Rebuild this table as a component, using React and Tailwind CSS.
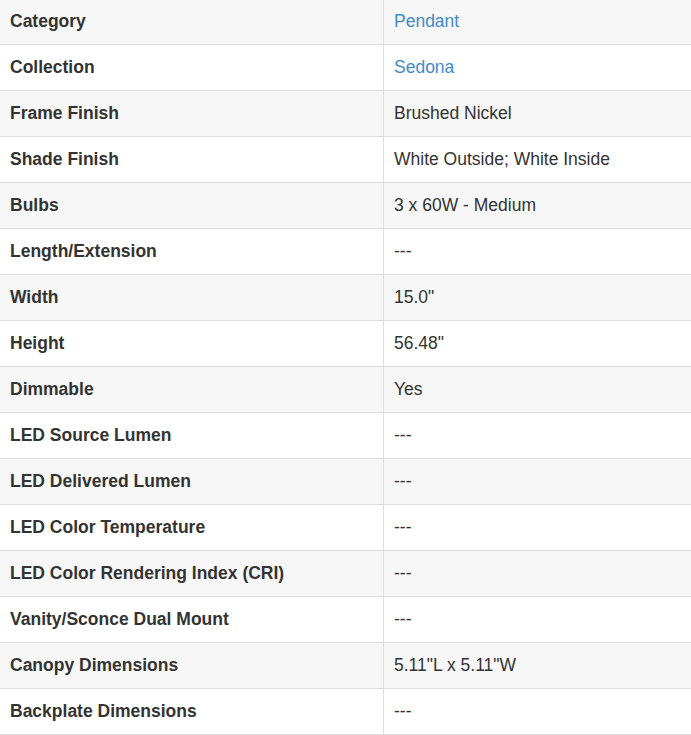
const specs = [
  { label: "Category", value: "Pendant", link: true },
  { label: "Collection", value: "Sedona", link: true },
  { label: "Frame Finish", value: "Brushed Nickel" },
  { label: "Shade Finish", value: "White Outside; White Inside" },
  { label: "Bulbs", value: "3 x 60W - Medium" },
  { label: "Length/Extension", value: "---" },
  { label: "Width", value: "15.0\"" },
  { label: "Height", value: "56.48\"" },
  { label: "Dimmable", value: "Yes" },
  { label: "LED Source Lumen", value: "---" },
  { label: "LED Delivered Lumen", value: "---" },
  { label: "LED Color Temperature", value: "---" },
  { label: "LED Color Rendering Index (CRI)", value: "---" },
  { label: "Vanity/Sconce Dual Mount", value: "---" },
  { label: "Canopy Dimensions", value: "5.11\"L x 5.11\"W" },
  { label: "Backplate Dimensions", value: "---" },
];

export default function App() {
  return (
    <div className="w-[691px] h-[735px] overflow-hidden bg-white font-['Liberation_Sans',Arial,sans-serif] text-[17.5px] text-[#333]">
      <div className="-mt-px flex flex-col">
        {specs.map((row, i) => (
          <div
            key={row.label}
            className={`flex h-[46px] border-b border-[#ddd] ${i % 2 === 0 ? "bg-[#f7f7f7]" : "bg-white"}`}
          >
            <div className="w-[384px] shrink-0 border-r border-[#ddd] flex items-center pl-[10px] font-bold">
              {row.label}
            </div>
            <div className="flex-1 flex items-center pl-[10px]">
              {row.link ? (
                <a href="#" className="text-[#428bca]">{row.value}</a>
              ) : (
                <span>{row.value}</span>
              )}
            </div>
          </div>
        ))}
      </div>
    </div>
  );
}
